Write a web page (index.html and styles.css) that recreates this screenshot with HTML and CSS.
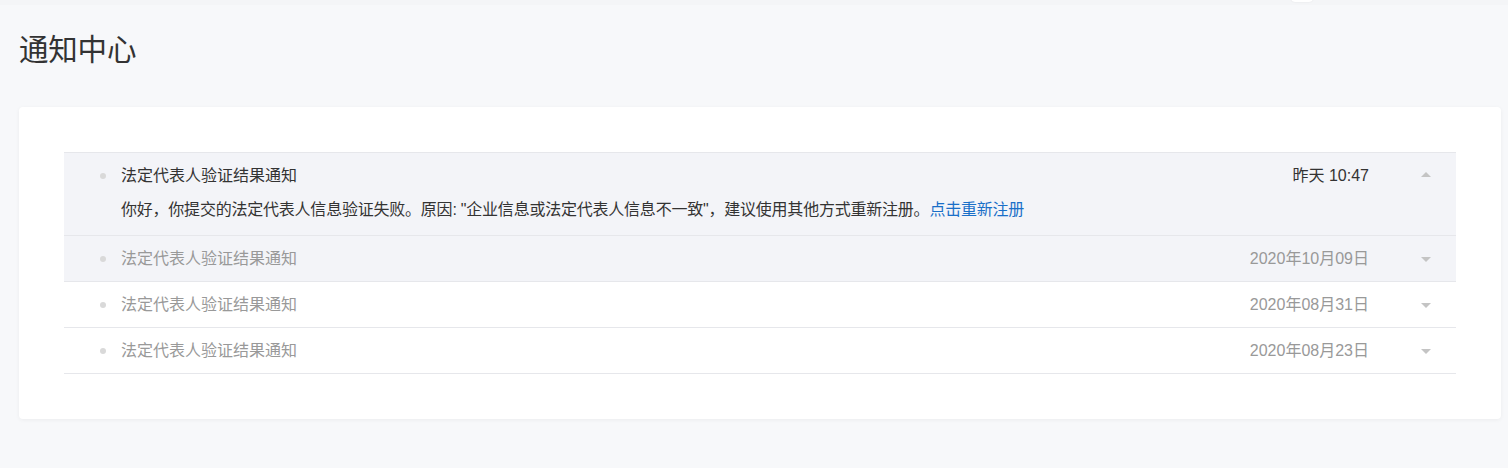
FILE: index.html
```html
<!DOCTYPE html>
<html lang="zh-CN">
<head>
<meta charset="utf-8">
<title>通知中心</title>
<link rel="stylesheet" href="styles.css">
</head>
<body>
<div class="topbar"><span class="top-tab"></span></div>
<main class="page">
  <h1 class="page-title">通知中心</h1>
  <section class="card">
    <ul class="notice-list">
      <li class="notice is-open">
        <div class="notice-head">
          <span class="dot"></span>
          <span class="notice-title">法定代表人验证结果通知</span>
          <span class="notice-date">昨天 10:47</span>
          <span class="caret caret-up"></span>
        </div>
        <div class="notice-body">你好，你提交的法定代表人信息验证失败。原因: "企业信息或法定代表人信息不一致"，建议使用其他方式重新注册。<a class="notice-link" href="#">点击重新注册</a></div>
      </li>
      <li class="notice is-hover">
        <div class="notice-head">
          <span class="dot"></span>
          <span class="notice-title">法定代表人验证结果通知</span>
          <span class="notice-date">2020年10月09日</span>
          <span class="caret caret-down"></span>
        </div>
      </li>
      <li class="notice">
        <div class="notice-head">
          <span class="dot"></span>
          <span class="notice-title">法定代表人验证结果通知</span>
          <span class="notice-date">2020年08月31日</span>
          <span class="caret caret-down"></span>
        </div>
      </li>
      <li class="notice">
        <div class="notice-head">
          <span class="dot"></span>
          <span class="notice-title">法定代表人验证结果通知</span>
          <span class="notice-date">2020年08月23日</span>
          <span class="caret caret-down"></span>
        </div>
      </li>
    </ul>
  </section>
</main>
</body>
</html>
```
FILE: styles.css
```css
* { box-sizing: border-box; }
html, body { margin: 0; padding: 0; }
body {
  background: #f7f8fa;
  font-family: "Liberation Sans", "Noto Sans CJK SC", sans-serif;
  color: #333;
  width: 1508px;
  height: 468px;
  overflow: hidden;
}
.topbar {
  height: 5px;
  background: #f4f5f7;
  position: relative;
}
.top-tab {
  position: absolute;
  left: 1291px;
  top: -6px;
  width: 22px;
  height: 8px;
  background: #fff;
  border-radius: 4px;
  box-shadow: 0 0 2px rgba(0,0,0,0.08);
}
.page {
  padding: 0 7px 0 19px;
}
.page-title {
  margin: 0 0 40px;
  padding-top: 22px;
  font-family: "Noto Sans CJK SC", sans-serif;
  font-weight: 400;
  font-size: 29.5px;
  line-height: 40px;
  letter-spacing: -0.2px;
  color: #333;
}
.card {
  background: #fff;
  border-radius: 4px;
  box-shadow: 0 1px 4px rgba(0,0,0,0.05);
  padding: 45px;
}
.notice-list {
  list-style: none;
  margin: 0;
  padding: 0;
  border-top: 1px solid #e6e7eb;
}
.notice {
  border-bottom: 1px solid #e6e7eb;
}
.notice.is-open, .notice.is-hover {
  background: #f3f4f8;
}
.notice-head {
  height: 45px;
  display: flex;
  align-items: center;
  padding: 0 25px 3px 36px;
  font-size: 16px;
  color: #999;
}
.dot {
  width: 6px;
  height: 6px;
  border-radius: 50%;
  background: #d9d9d9;
  margin-right: 15px;
  margin-top: 3px;
  flex: none;
}
.notice-title {
  flex: 1;
}
.notice-date {
  margin-right: 52px;
}
.is-open .notice-head { color: #333; }
.caret {
  width: 0;
  height: 0;
  border-left: 5px solid transparent;
  border-right: 5px solid transparent;
  flex: none;
}
.caret-up { border-bottom: 5px solid #c4c4c4; margin-top: 1px; }
.caret-down { border-top: 5px solid #c4c4c4; margin-top: 5px; }
.notice-body {
  padding: 0 25px 13px 57px;
  font-size: 16px;
  line-height: 24px;
  letter-spacing: -0.22px;
  color: #333;
}
.notice-link {
  color: #1a6fc8;
  text-decoration: none;
}
```
